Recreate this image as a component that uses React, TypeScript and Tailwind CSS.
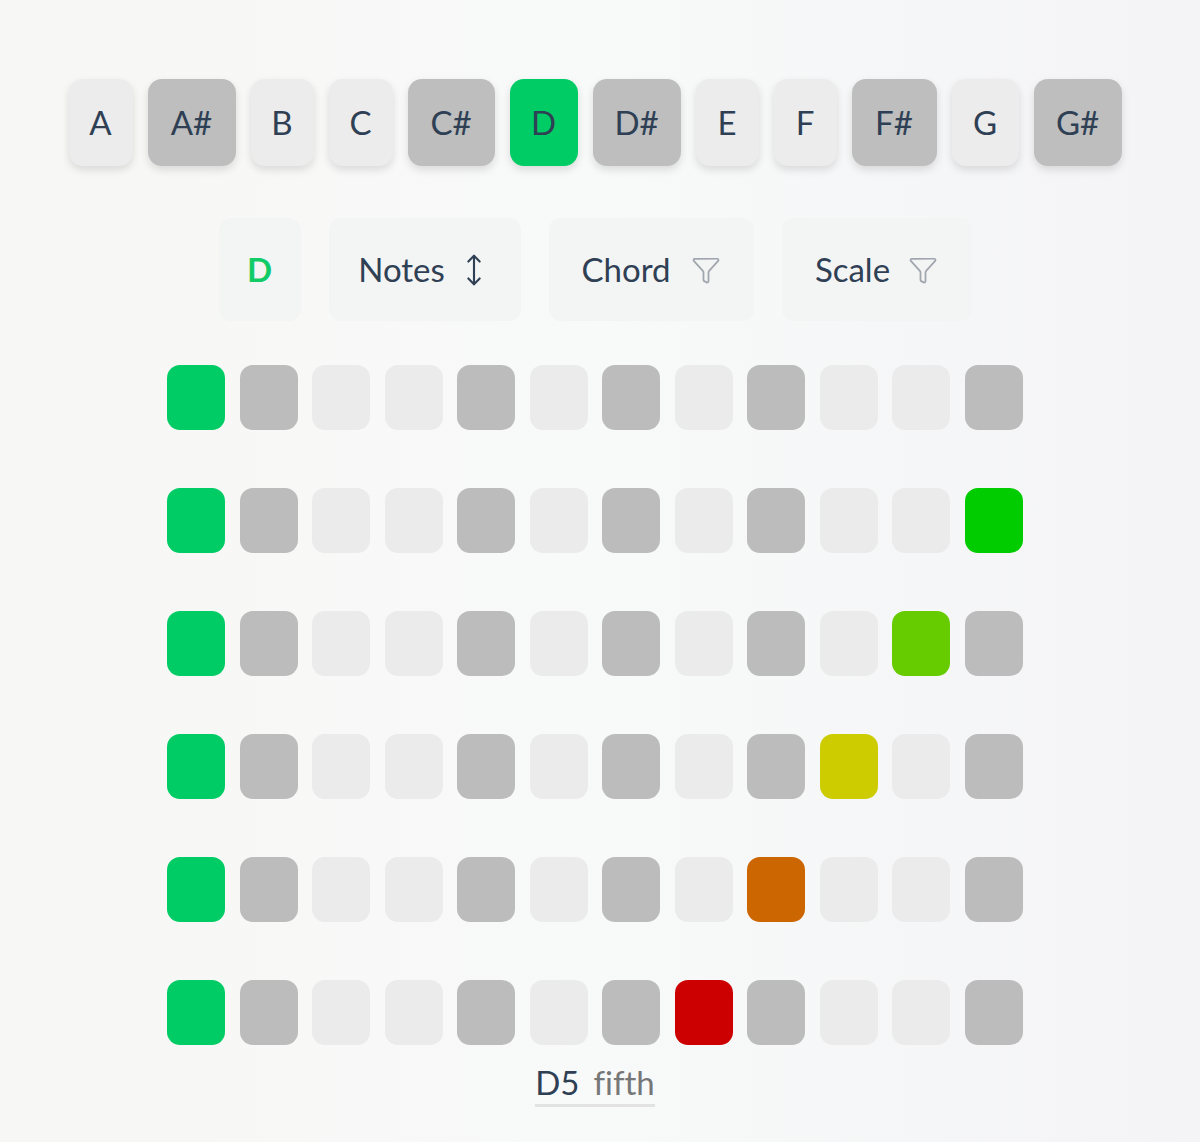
import { MoveVertical, Filter } from "lucide-react";

const KEYS: Array<[string, string]> = [
  ["A", "w-[64px]"],
  ["A#", "w-[88px]"],
  ["B", "w-[63px]"],
  ["C", "w-[64px]"],
  ["C#", "w-[87px]"],
  ["D", "w-[68px]"],
  ["D#", "w-[88px]"],
  ["E", "w-[63px]"],
  ["F", "w-[63px]"],
  ["F#", "w-[85px]"],
  ["G", "w-[67px]"],
  ["G#", "w-[88px]"],
];
const SELECTED = "D";

// chromatic order starting from the root (D)
const COLUMNS = ["D", "D#", "E", "F", "F#", "G", "G#", "A", "A#", "B", "C", "C#"];

// per row: [column index, colour] of the highlighted interval
const HIGHLIGHTS: Array<[number, string] | null> = [
  null,
  [11, "bg-[#00cc00]"],
  [10, "bg-[#66cc00]"],
  [9, "bg-[#cccc00]"],
  [8, "bg-[#cc6600]"],
  [7, "bg-[#cc0000]"],
];

function KeyButton({ name, width }: { name: string; width: string }) {
  const sharp = name.includes("#");
  const selected = name === SELECTED;
  const bg = selected ? "bg-[#00cc66]" : sharp ? "bg-[#bdbebd]" : "bg-[#ececec]";
  return (
    <button
      className={`${width} h-[87px] rounded-[14px] ${bg} text-[33px] text-[#2f4055] shadow-[0_4px_8px_rgba(0,0,0,0.12)] leading-none`}
    >
      {name}
    </button>
  );
}

function Cell({ col, row }: { col: number; row: number }) {
  const h = HIGHLIGHTS[row];
  let bg = COLUMNS[col].includes("#") ? "bg-[#bcbcbc]" : "bg-[#ebebeb]";
  if (col === 0) bg = "bg-[#00cc66]";
  if (h && h[0] === col) bg = h[1];
  return <div className={`w-[58px] h-[65px] rounded-[13px] ${bg}`} />;
}

export default function App() {
  return (
    <div
      className="min-h-[1142px] w-full bg-gradient-to-r from-[#f7f7f5] via-[#f8f9f9] to-[#f4f4f6] flex flex-col items-center pt-[79px] pr-[10px] [font-variant-ligatures:none]"
      style={{ fontFamily: "Lato, 'Open Sans', sans-serif" }}
    >
      <div className="flex gap-[15px]">
        {KEYS.map(([k, w]) => (
          <KeyButton key={k} name={k} width={w} />
        ))}
      </div>

      <div className="flex gap-[28px] mt-[52px] text-[33px] text-[#2f4055]">
        <div className="w-[82px] h-[103px] rounded-[12px] bg-[#f3f4f4] flex items-center justify-center font-bold text-[#11cc66]">
          D
        </div>
        <div className="w-[192px] h-[103px] rounded-[12px] bg-[#f3f4f4] flex items-center justify-center gap-[12px]">
          Notes
          <MoveVertical className="w-[34px] h-[38px] text-[#2f4055]" strokeWidth={1.5} />
        </div>
        <div className="w-[205px] h-[103px] rounded-[12px] bg-[#f3f4f4] flex items-center justify-center gap-[20px]">
          Chord
          <Filter className="w-[30px] h-[30px] text-[#a0a6ad]" strokeWidth={1.4} />
        </div>
        <div className="w-[190px] h-[103px] rounded-[12px] bg-[#f3f4f4] flex items-center justify-center gap-[18px]">
          Scale
          <Filter className="w-[30px] h-[30px] text-[#a0a6ad]" strokeWidth={1.4} />
        </div>
      </div>

      <div className="flex flex-col gap-[58px] mt-[44px]">
        {HIGHLIGHTS.map((_, row) => (
          <div key={row} className="flex gap-[14.5px]">
            {COLUMNS.map((_, col) => (
              <Cell key={col} col={col} row={row} />
            ))}
          </div>
        ))}
      </div>

      <div className="mt-[17px] text-[33px] leading-[40px] border-b-[3px] border-[#e2e2e2] pb-[2px] flex gap-[14px]">
        <span className="text-[#2f4055]">D5</span>
        <span className="text-[#777777]">fifth</span>
      </div>
    </div>
  );
}
